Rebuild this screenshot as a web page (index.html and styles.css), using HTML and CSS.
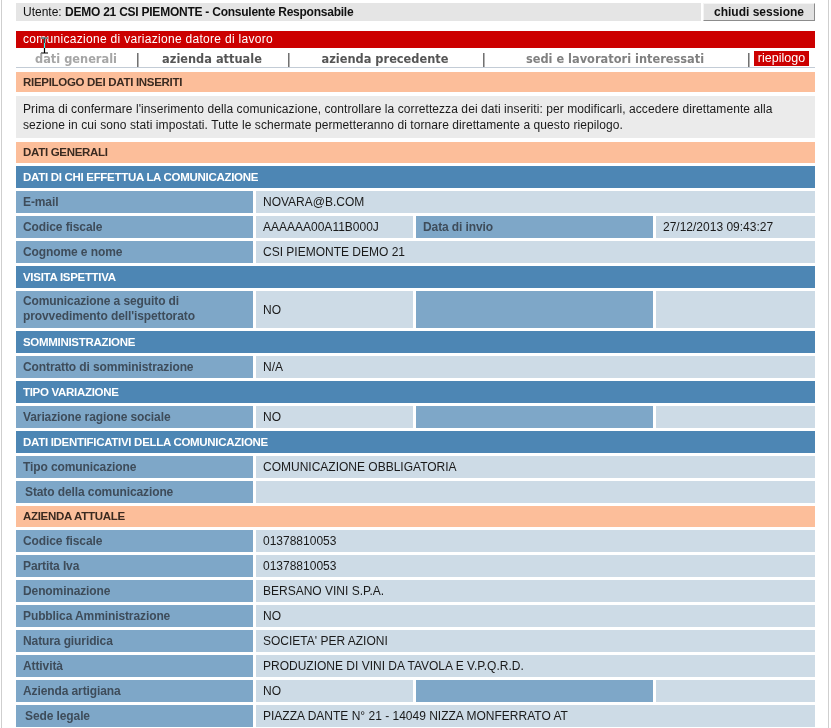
FILE: index.html
```html
<!DOCTYPE html>
<html lang="it">
<head>
<meta charset="utf-8">
<title>Riepilogo</title>
<link rel="stylesheet" href="styles.css">
</head>
<body>
<div class="page">
  <div class="topbar">
    <div class="user">Utente: <b>DEMO 21 CSI PIEMONTE - Consulente Responsabile</b></div>
    <div class="logout">chiudi sessione</div>
  </div>
  <div class="titlebar">comunicazione di variazione datore di lavoro</div>
  <div class="nav">
    <span class="tab t-done">dati generali</span>
    <span class="sep">|</span>
    <span class="tab t-dark">azienda attuale</span>
    <span class="sep">|</span>
    <span class="tab t-dark">azienda precedente</span>
    <span class="sep">|</span>
    <span class="tab t-light">sedi e lavoratori interessati</span>
    <span class="sep">|</span>
    <span class="tab"><span class="active">riepilogo</span></span>
  </div>
  <svg class="cursor" width="9" height="17" viewBox="0 0 9 17"><path d="M1 1h3v0h1h3M4.5 1v15M1 16h3h1h3" stroke="#fff" stroke-width="1.2" fill="none"/></svg>
  <div class="salmon">RIEPILOGO DEI DATI INSERITI</div>
  <div class="intro">Prima di confermare l'inserimento della comunicazione, controllare la correttezza dei dati inseriti: per modificarli, accedere direttamente alla sezione in cui sono stati impostati. Tutte le schermate permetteranno di tornare direttamente a questo riepilogo.</div>
  <div class="grid">
    <div class="salmon full">DATI GENERALI</div>
    <div class="head full">DATI DI CHI EFFETTUA LA COMUNICAZIONE</div>
    <div class="lab">E-mail</div><div class="val span3">NOVARA@B.COM</div>
    <div class="lab">Codice fiscale</div><div class="val">AAAAAA00A11B000J</div><div class="lab">Data di invio</div><div class="val">27/12/2013 09:43:27</div>
    <div class="lab">Cognome e nome</div><div class="val span3">CSI PIEMONTE DEMO 21</div>
    <div class="head full">VISITA ISPETTIVA</div>
    <div class="lab tall">Comunicazione a seguito di<br>provvedimento dell'ispettorato</div><div class="val">NO</div><div class="lab"></div><div class="val"></div>
    <div class="head full">SOMMINISTRAZIONE</div>
    <div class="lab">Contratto di somministrazione</div><div class="val span3">N/A</div>
    <div class="head full">TIPO VARIAZIONE</div>
    <div class="lab">Variazione ragione sociale</div><div class="val">NO</div><div class="lab"></div><div class="val"></div>
    <div class="head full">DATI IDENTIFICATIVI DELLA COMUNICAZIONE</div>
    <div class="lab">Tipo comunicazione</div><div class="val span3">COMUNICAZIONE OBBLIGATORIA</div>
    <div class="lab indent">Stato della comunicazione</div><div class="val span3"></div>
    <div class="salmon full">AZIENDA ATTUALE</div>
    <div class="lab">Codice fiscale</div><div class="val span3">01378810053</div>
    <div class="lab">Partita Iva</div><div class="val span3">01378810053</div>
    <div class="lab">Denominazione</div><div class="val span3">BERSANO VINI S.P.A.</div>
    <div class="lab">Pubblica Amministrazione</div><div class="val span3">NO</div>
    <div class="lab">Natura giuridica</div><div class="val span3">SOCIETA' PER AZIONI</div>
    <div class="lab">Attività</div><div class="val span3">PRODUZIONE DI VINI DA TAVOLA E V.P.Q.R.D.</div>
    <div class="lab">Azienda artigiana</div><div class="val">NO</div><div class="lab"></div><div class="val"></div>
    <div class="lab indent">Sede legale</div><div class="val span3">PIAZZA DANTE N° 21 - 14049 NIZZA MONFERRATO AT</div>
  </div>
</div>
</body>
</html>
```
FILE: styles.css
```css
html, body {
  margin: 0;
  padding: 0;
  background: #fff;
}
body {
  font-family: "Liberation Sans", Arial, sans-serif;
  font-size: 12px;
  color: #1a1a1a;
}
.page {
  position: relative;
  box-sizing: border-box;
  width: 828px;
  min-height: 728px;
  margin-left: 1px;
  border-left: 1px solid #cfcfcf;
  border-right: 1px solid #cfcfcf;
  padding: 3px 13px 0 14px;
}
.topbar {
  display: flex;
  gap: 2px;
  height: 18px;
}
.user {
  flex: 1;
  background: #e5e5e5;
  padding-left: 7px;
  line-height: 18px;
  color: #111;
}
.user b {
  letter-spacing: -0.24px;
}
.logout {
  box-sizing: border-box;
  width: 112px;
  background: #e2e2e2;
  border: 1px solid;
  border-color: #f4f4f4 #8c8c8c #8c8c8c #f4f4f4;
  text-align: center;
  font-weight: bold;
  line-height: 16px;
  color: #111;
}
.titlebar {
  margin-top: 10px;
  height: 17px;
  line-height: 17px;
  background: #cc0000;
  color: #fff;
  padding-left: 7px;
  letter-spacing: 0.3px;
}
.nav {
  display: grid;
  grid-template-columns: 120px 1px 150px 1px 194px 1px 264px 1px 1fr;
  align-items: center;
  box-sizing: border-box;
  height: 20px;
  padding-top: 2px;
  border-bottom: 1px solid #c3ccd6;
  font-family: "DejaVu Sans", Verdana, sans-serif;
  font-size: 11.4px;
  font-weight: bold;
}
.tab {
  text-align: center;
  white-space: nowrap;
}
.sep {
  font-family: "Liberation Sans", Arial, sans-serif;
  font-weight: normal;
  font-size: 14px;
  color: #444;
  text-align: center;
}
.t-done { color: #a6a6a6; }
.t-dark { color: #555; }
.t-light { color: #808080; }
.active {
  display: inline-block;
  background: #cc0000;
  color: #fff;
  font-family: "Liberation Sans", Arial, sans-serif;
  font-weight: normal;
  font-size: 12.5px;
  padding: 1px 4px 1px 4px;
  line-height: 13px;
}
.cursor {
  position: absolute;
  left: 38px;
  top: 37px;
  mix-blend-mode: difference;
}
.salmon {
  background: #fcbe9a;
  color: #3a2a20;
  font-weight: bold;
  font-size: 11.5px;
  letter-spacing: -0.3px;
  padding-left: 7px;
  height: 20px;
  line-height: 20px;
  margin-top: 4px;
}
.intro {
  margin-top: 4px;
  background: #ebebeb;
  padding: 5px 7px;
  line-height: 16px;
  color: #1a1a1a;
  letter-spacing: 0.08px;
}
.grid {
  display: grid;
  grid-template-columns: 237px 157px 237px 1fr;
  gap: 3px;
  margin-top: 4px;
}
.grid .salmon {
  margin-top: 0;
  height: 21px;
  line-height: 21px;
}
.full { grid-column: 1 / -1; }
.span3 { grid-column: span 3; }
.head {
  background: #4d86b4;
  color: #fff;
  font-weight: bold;
  font-size: 11.5px;
  letter-spacing: -0.3px;
  padding-left: 7px;
  height: 22px;
  line-height: 22px;
}
.lab, .val {
  min-height: 22px;
  display: flex;
  align-items: center;
  padding-left: 7px;
}
.lab {
  background: #7ea7c8;
  color: #3e4c5a;
  font-weight: bold;
  letter-spacing: -0.1px;
}
.lab.indent {
  padding-left: 9px;
}
.val {
  background: #cddbe6;
  color: #1a1a1a;
}
.tall {
  display: block;
  height: 37px;
  box-sizing: border-box;
  padding-top: 3px;
  line-height: 15px;
}
```
